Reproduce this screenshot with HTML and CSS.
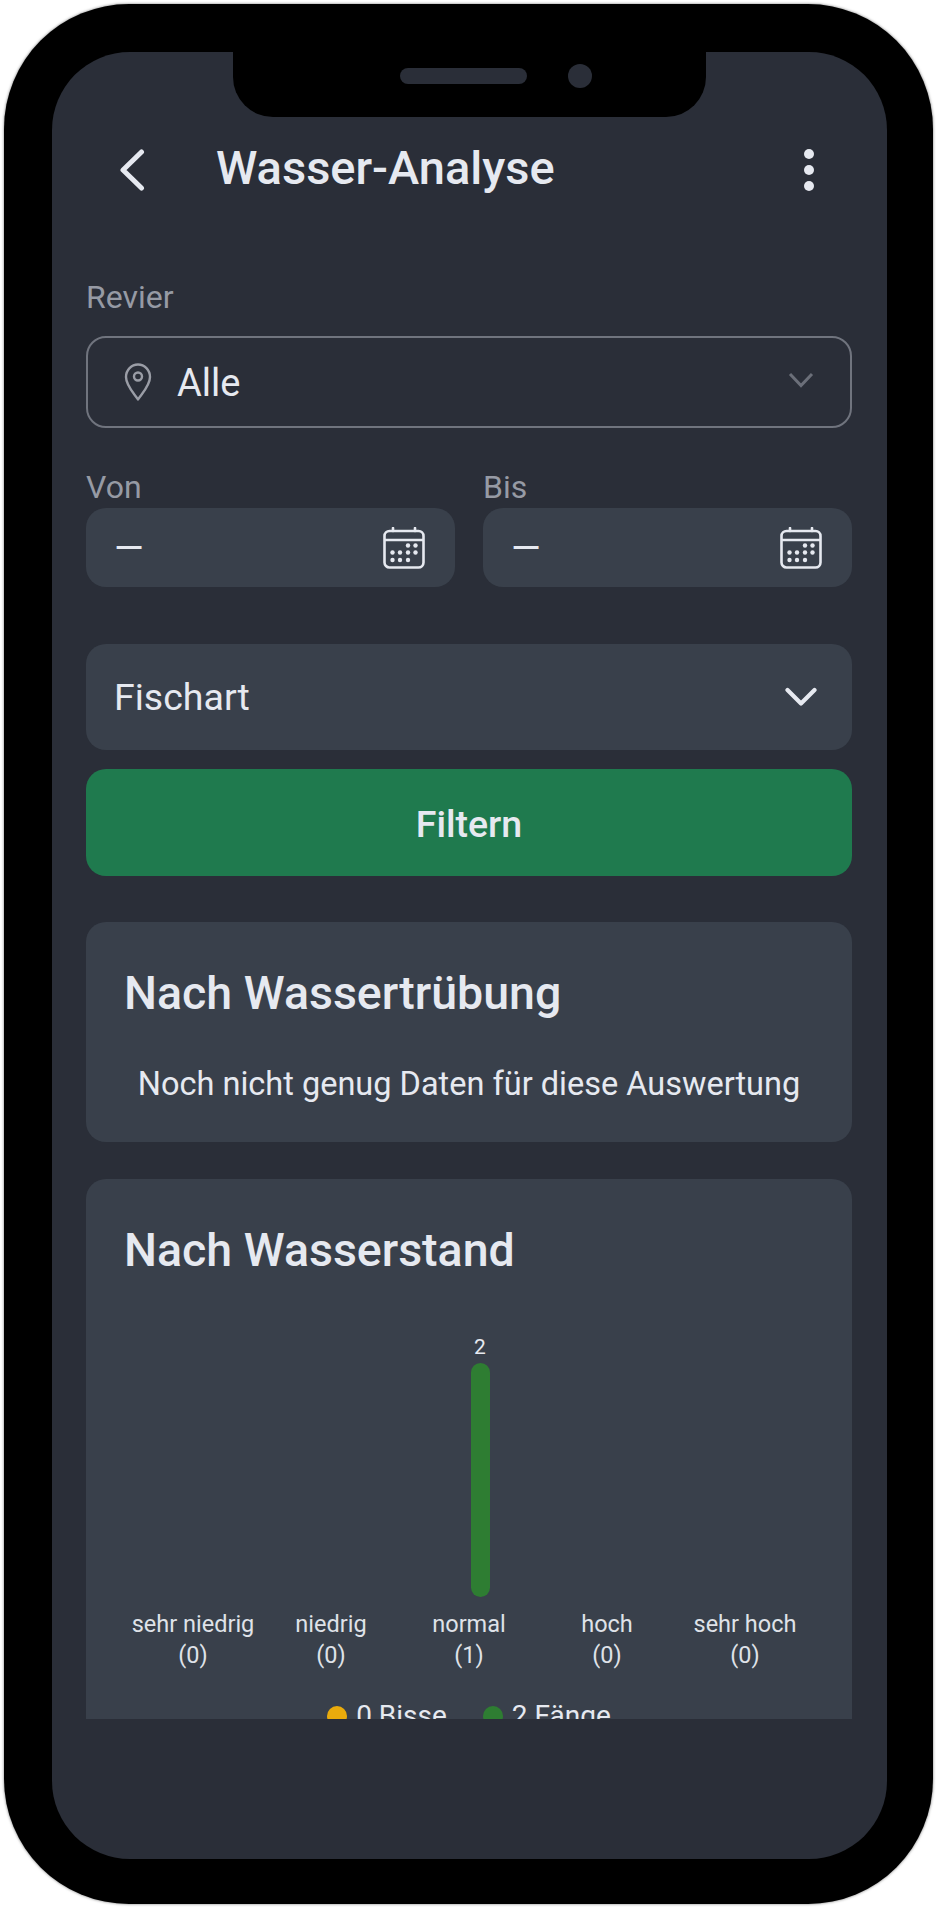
FILE: index.html
```html
<html>
    <head>
        <meta charset="utf-8">
        <title>Wasser-Analyse</title>
        <link rel="stylesheet" href="styles.css">
    </head>
    <body>
        <div class="phone">
            <div class="screen">
                <!-- notch with speaker and camera lies over the screen -->
                <div class="notch">
                    <div class="speaker"></div>
                    <div class="camera"></div>
                </div>
                <div class="header">
                    <svg class="back" width="26" height="42" viewBox="0 0 26 42"><path d="M22.5 3 L4 21 L22.5 39" fill="none" stroke="#e6e9f0" stroke-width="5" stroke-linecap="round" stroke-linejoin="round"/></svg>
                    <div class="title">Wasser-Analyse</div>
                    <svg class="more" width="12" height="42" viewBox="0 0 12 42"><circle cx="6" cy="5" r="5" fill="#e6e9f0"/><circle cx="6" cy="21" r="5" fill="#e6e9f0"/><circle cx="6" cy="37" r="5" fill="#e6e9f0"/></svg>
                </div>
                <div class="content">
                    <div class="label revier_label">Revier</div>
                    <div class="select_outline">
                        <svg class="pin" width="28" height="38" viewBox="0 0 28 38"><path d="M14 36.5 C11 31.5 2 23 2 14 C2 7 7.5 1.5 14 1.5 C20.5 1.5 26 7 26 14 C26 23 17 31.5 14 36.5 Z" fill="none" stroke="#9a9da6" stroke-width="2.4" stroke-linejoin="round"/><circle cx="14" cy="13.5" r="4" fill="none" stroke="#9a9da6" stroke-width="2.4"/></svg>
                        <div class="select_value">Alle</div>
                        <svg class="chevron_small" width="26" height="16" viewBox="0 0 26 16"><path d="M2 2 L13 13.5 L24 2" fill="none" stroke="#6b6f79" stroke-width="3"/></svg>
                    </div>
                    <div class="dates">
                        <div class="date_col">
                            <div class="label">Von</div>
                            <div class="date_field">
                                <div class="dash">—</div>
                                <svg class="calendar" width="42" height="42" viewBox="0 0 42 42"><use href="#cal"/></svg>
                            </div>
                        </div>
                        <div class="date_col">
                            <div class="label">Bis</div>
                            <div class="date_field">
                                <div class="dash">—</div>
                                <svg class="calendar" width="42" height="42" viewBox="0 0 42 42"><use href="#cal"/></svg>
                            </div>
                        </div>
                    </div>
                    <div class="fish_select">
                        <div class="fish_text">Fischart</div>
                        <svg width="32" height="20" viewBox="0 0 32 20"><path d="M2.5 3 L16 16.5 L29.5 3" fill="none" stroke="#e6e9f0" stroke-width="4.2" stroke-linecap="round" stroke-linejoin="round"/></svg>
                    </div>
                    <div class="filter_button">Filtern</div>
                    <div class="card card_first">
                        <div class="card_title">Nach Wassertrübung</div>
                        <div class="no_data">Noch nicht genug Daten für diese Auswertung</div>
                    </div>
                    <div class="card card_chart">
                        <div class="card_title">Nach Wasserstand</div>
                        <div class="chart">
                            <div class="column"></div>
                            <div class="column"></div>
                            <div class="column">
                                <div class="bar_value">2</div>
                                <div class="bars">
                                    <!-- bites bar has no height, catches bar sits beside it -->
                                    <div class="bar_empty"></div>
                                    <div class="bar"></div>
                                </div>
                            </div>
                            <div class="column"></div>
                            <div class="column"></div>
                        </div>
                        <div class="axis">
                            <div class="tick">sehr niedrig<br>(0)</div>
                            <div class="tick">niedrig<br>(0)</div>
                            <div class="tick">normal<br>(1)</div>
                            <div class="tick">hoch<br>(0)</div>
                            <div class="tick">sehr hoch<br>(0)</div>
                        </div>
                        <div class="legend">
                            <div class="legend_item"><span class="dot dot_yellow"></span>0 Bisse</div>
                            <div class="legend_item"><span class="dot dot_green"></span>2 Fänge</div>
                        </div>
                    </div>
                </div>
            </div>
        </div>
        <svg class="defs" width="0" height="0">
            <defs>
                <g id="cal" fill="none" stroke="#e6e9f0" stroke-width="2.6">
                    <rect x="1.5" y="4" width="39" height="36.5" rx="5"/>
                    <path d="M1.5 13 H40.5"/>
                    <path d="M10 1 V4 M32 1 V4" stroke-linecap="round"/>
                    <g fill="#e6e9f0" stroke="none">
                        <circle cx="25" cy="18.5" r="2.2"/><circle cx="32.500" cy="18.500" r="2.2"/>
                        <circle cx="9.500" cy="25.500" r="2.2"/><circle cx="17" cy="25.500" r="2.2"/><circle cx="25" cy="25.500" r="2.2"/><circle cx="32.500" cy="25.500" r="2.2"/>
                        <circle cx="9.500" cy="33" r="2.2"/><circle cx="17" cy="33" r="2.2"/><circle cx="25" cy="33" r="2.2"/>
                    </g>
                </g>
            </defs>
        </svg>
    </body>
</html>
```

FILE: styles.css
```css
html, body {
    margin: 0;
    background: #ffffff;
    font-family: Roboto, "Liberation Sans", sans-serif;
}
.phone {
    box-sizing: border-box;
    width: 929px;
    height: 1900px;
    margin: 4px 0 0 4px;
    padding: 48px 46px 45px 48px;
    background: #000000;
    border-radius: 125px;
    box-shadow: 0 0 3px rgba(0, 0, 0, 0.55);
}
.screen {
    position: relative;
    height: 100%;
    background: #2a2e38;
    border-radius: 78px;
    overflow: hidden;
}
.notch {
    position: absolute;
    top: 0;
    left: 181px;
    width: 473px;
    height: 65px;
    background: #000000;
    border-radius: 0 0 40px 40px;
}
.speaker {
    position: absolute;
    top: 16px;
    left: 167px;
    width: 127px;
    height: 16px;
    background: #2a2e38;
    border-radius: 8px;
}
.camera {
    position: absolute;
    top: 12px;
    left: 335px;
    width: 24px;
    height: 24px;
    background: #2a2e38;
    border-radius: 50%;
}
.header {
    display: flex;
    align-items: center;
    height: 42px;
    padding: 94px 0 0 67px;
}
.back, .more {
    margin-top: 6px;
}
.title {
    flex: 1;
    margin-left: 71px;
    font-size: 47px;
    font-weight: 500;
    color: #e6e9f0;
}
.more {
    margin-right: 72px;
}
.content {
    box-sizing: border-box;
    height: 1531px;
    padding: 0 35px 0 34px;
    overflow: hidden;
}
.label {
    font-size: 32px;
    line-height: 36px;
    color: #969aa4;
}
.revier_label {
    margin-top: 91px;
}
.select_outline {
    box-sizing: border-box;
    display: flex;
    align-items: center;
    height: 92px;
    margin-top: 21px;
    padding: 0 36px 0 36px;
    border: 2px solid #70747e;
    border-radius: 20px;
}
.select_value {
    flex: 1;
    margin-left: 25px;
    padding-top: 2px;
    font-size: 38px;
    color: #e6e9f0;
}
.chevron_small {
    margin-top: -4px;
}
.dates {
    display: flex;
    gap: 28px;
    margin-top: 41px;
}
.date_col {
    flex: 1;
}
.date_field {
    display: flex;
    align-items: center;
    justify-content: space-between;
    height: 79px;
    margin-top: 3px;
    padding: 0 30px 0 28px;
    background: #39404b;
    border-radius: 20px;
}
.dash {
    font-size: 38px;
    color: #e6e9f0;
}
.calendar {
    display: block;
}
.fish_select {
    display: flex;
    align-items: center;
    justify-content: space-between;
    height: 106px;
    margin-top: 57px;
    padding: 0 35px 0 28px;
    background: #39404b;
    border-radius: 20px;
}
.fish_text {
    font-size: 37.5px;
    color: #e6e9f0;
}
.filter_button {
    height: 107px;
    margin-top: 19px;
    line-height: 110px;
    text-align: center;
    font-size: 37.5px;
    font-weight: 500;
    color: #e6e9f0;
    background: #1f7a4e;
    border-radius: 20px;
}
.card {
    margin-top: 37px;
    padding: 46px 38px 0 38px;
    background: #39404b;
    border-radius: 20px;
}
.card_first {
    height: 220px;
    box-sizing: border-box;
    margin-top: 46px;
}
.card_chart {
    padding-bottom: 40px;
}
.card_title {
    font-size: 46.5px;
    line-height: 50px;
    font-weight: 500;
    color: #e6e9f0;
}
.no_data {
    margin-top: 48px;
    text-align: center;
    font-size: 32.5px;
    line-height: 36px;
    color: #e6e9f0;
}
.chart {
    display: grid;
    grid-template-columns: repeat(5, 1fr);
    height: 261px;
    margin-top: 60px;
    align-items: end;
}
.column {
    display: flex;
    flex-direction: column;
    align-items: center;
}
.bar_value {
    margin: 0 0 4px 22px;
    font-size: 21px;
    line-height: 24px;
    color: #e6e9f0;
}
.bars {
    display: flex;
    align-items: flex-end;
    gap: 3px;
}
.bar_empty {
    width: 19px;
}
.bar {
    width: 19px;
    height: 234px;
    background: #2e7d32;
    border-radius: 10px;
}
.axis {
    display: grid;
    grid-template-columns: repeat(5, 1fr);
    margin-top: 13px;
}
.tick {
    text-align: center;
    font-size: 23.5px;
    line-height: 30.5px;
    color: #dfe2e8;
}
.legend {
    display: flex;
    justify-content: center;
    gap: 36px;
    margin-top: 29px;
}
.legend_item {
    display: flex;
    align-items: center;
    gap: 9px;
    font-size: 28px;
    line-height: 34px;
    color: #e6e9f0;
}
.dot {
    width: 20px;
    height: 20px;
    border-radius: 50%;
}
.dot_yellow {
    background: #eaab0c;
}
.dot_green {
    background: #2e7d32;
}
.defs {
    position: absolute;
}
```
